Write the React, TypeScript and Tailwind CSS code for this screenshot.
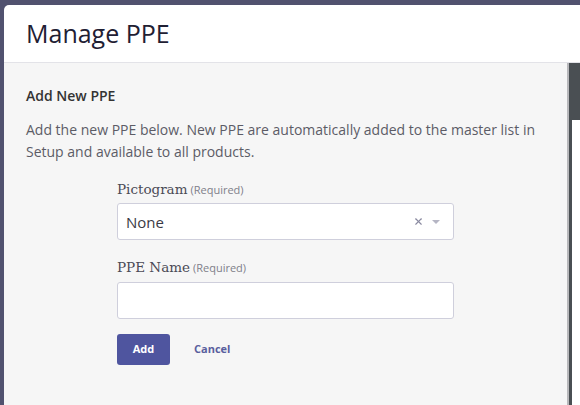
import { X } from "lucide-react";

export default function App() {
  return (
    <div className="relative h-[405px] w-[580px] overflow-hidden bg-[#51526f] pl-[4px] pt-[5px]">
      <div className="flex h-full flex-col overflow-hidden rounded-tl-[5px] bg-white">
        <header className="flex h-[58px] shrink-0 items-center border-b border-[#e3e3e8] pl-[22px]">
          <h1 className="font-['Open_Sans',sans-serif] text-[25px] leading-none text-[#1f2033]">
            Manage PPE
          </h1>
        </header>
        <div className="flex flex-1">
          <main className="flex-1 bg-[#f6f6f6] pl-[22px] pr-4 pt-[24px] font-['Open_Sans',sans-serif]">
            <h2 className="text-[14px] font-semibold leading-[18px] text-[#333]">
              Add New PPE
            </h2>
            <p className="mt-[14px] text-[14px] leading-[22px] text-[#5c5c66]">
              Add the new PPE below. New PPE are automatically added to the master list in Setup and
              available to all products.
            </p>
            <form className="ml-[91px] mt-[16px] flex w-[337px] flex-col">
              <label className="flex items-baseline gap-[3px]">
                <span className="font-['DejaVu_Serif',serif] text-[13.5px] text-[#4a4a55]">
                  Pictogram
                </span>
                <span className="text-[11px] text-[#80808a]">(Required)</span>
              </label>
              <div className="mt-[4px] flex h-[37px] items-center rounded-[3px] border border-[#cfcfdc] bg-white pl-[8px] pr-[12px]">
                <span className="flex-1 text-[15px] text-[#3a3a44]">None</span>
                <X className="h-[11px] w-[11px] text-[#8a8aa0]" strokeWidth={2.5} />
                <svg className="ml-[7px] h-[6px] w-[10px]" viewBox="0 0 10 6">
                  <path d="M1 1h8L5 5z" fill="#b5b5c4" />
                </svg>
              </div>
              <label className="mt-[17px] flex items-baseline gap-[3px]">
                <span className="font-['DejaVu_Serif',serif] text-[13.5px] text-[#4a4a55]">
                  PPE Name
                </span>
                <span className="text-[11px] text-[#80808a]">(Required)</span>
              </label>
              <input
                className="mt-[4px] h-[37px] rounded-[3px] border border-[#cfcfdc] bg-white px-[8px]"
                type="text"
              />
              <div className="mt-[15px] flex items-center gap-[24px]">
                <button
                  type="button"
                  className="h-[31px] w-[53px] rounded-[3px] bg-[#4f559f] text-[11px] font-bold text-white"
                >
                  Add
                </button>
                <button type="button" className="text-[11px] font-bold text-[#5a5f9e]">
                  Cancel
                </button>
              </div>
            </form>
          </main>
          <aside className="w-[13px] border-l-2 border-[#b8b8bb] bg-[#4a4f53] pt-[57px] pl-[3px]">
            <div className="h-full bg-white" />
          </aside>
        </div>
      </div>
    </div>
  );
}
